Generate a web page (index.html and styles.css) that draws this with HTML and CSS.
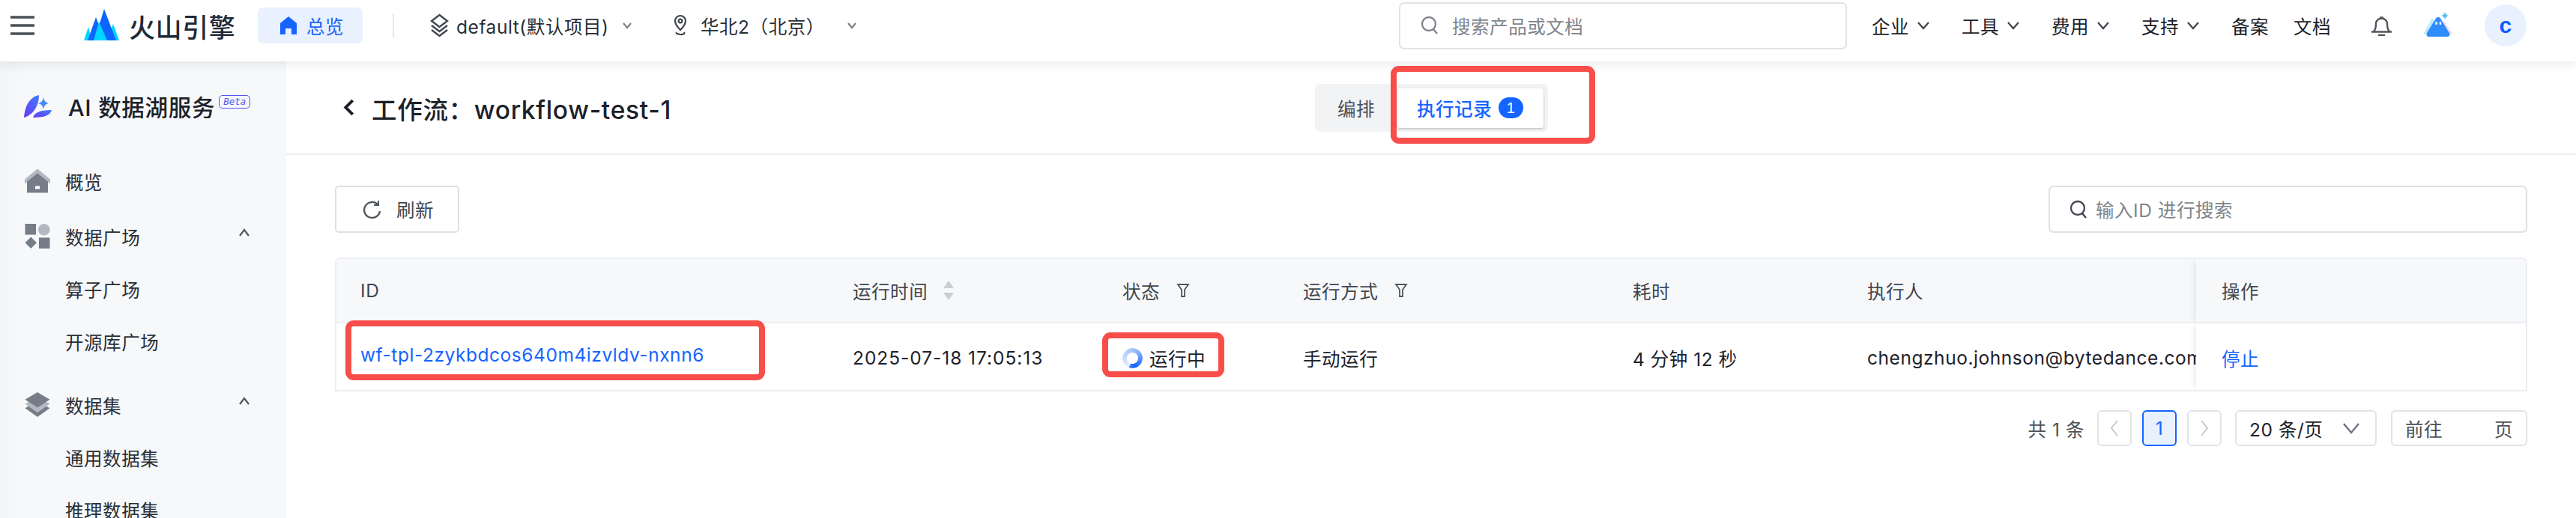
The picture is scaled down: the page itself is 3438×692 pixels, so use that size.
FILE: index.html
```html
<!DOCTYPE html>
<html lang="en">
<head>
  <meta charset="UTF-8" />
  <title>工作流 - AI 数据湖服务</title>
  <link rel="stylesheet" href="styles.css">
</head>
<body>
  <header class="topbar">
    <svg class="menu-icon" viewBox="0 0 32 26"><path d="M0 2h32M0 13h32M0 24h32" stroke="#4b5057" stroke-width="3.4" fill="none"/></svg>
    <svg class="logo" viewBox="0 0 47 43">
      <path d="M0 42 6 24 8 32 12 42z" fill="#00d5ff"/>
      <path d="M47 42 39 20 35 30 37 42z" fill="#00d5ff"/>
      <path d="M5 42 16 11 22 26 14 42z" fill="#0a66ff"/>
      <path d="M14 42 27 0 43 42z" fill="#0a66ff"/>
      <path d="M13 42 20 17 31 42z" fill="#00d5ff"/>
    </svg>
    <span class="brand">火山引擎</span>
    <a class="home-tab">
      <svg viewBox="0 0 22 24"><path d="M11 0 22 9v15h-7v-8H7v8H0V9z" fill="#1664ff"/></svg>
      总览
    </a>
    <span class="top-divider"></span>
    <div class="project">
      <svg class="project-icon" viewBox="0 0 27 32" fill="none" stroke="#41464f" stroke-width="2.4"><path d="M13.500 2 24 10 13.500 18 3 10zM3 16l10.500 8L24 16M3 22l10.500 8L24 22"/></svg>
      <span>default(默认项目)</span>
      <svg class="chev-small" viewBox="0 0 14 10"><path d="M2 2l5 6 5-6" fill="none" stroke="#7b818a" stroke-width="2.200"/></svg>
    </div>
    <div class="region">
      <svg class="pin-icon" viewBox="0 0 18 30" fill="none" stroke="#41464f" stroke-width="2.200"><path d="M9 21C4 16 2 12 2 9a7 7 0 0 1 14 0c0 3-2 7-7 12z"/><circle cx="9" cy="9" r="2.400"/><path d="M4 24c-3 3 13 5 10 0"/></svg>
      <span>华北2（北京）</span>
      <svg class="chev-small" viewBox="0 0 14 10"><path d="M2 2l5 6 5-6" fill="none" stroke="#7b818a" stroke-width="2.200"/></svg>
    </div>
    <div class="top-search">
      <svg class="search-icon" viewBox="0 0 24 26" fill="none" stroke="#80858c" stroke-width="2.300"><circle cx="11" cy="11" r="9"/><path d="M17 18l5 6"/></svg>
      <span>搜索产品或文档</span>
    </div>
    <nav class="top-nav">
      <a class="nav-drop">企业<svg viewBox="0 0 18 12"><path d="M2 2l7 8 7-8" fill="none" stroke="#41464f" stroke-width="2.300"/></svg></a>
      <a class="nav-drop">工具<svg viewBox="0 0 18 12"><path d="M2 2l7 8 7-8" fill="none" stroke="#41464f" stroke-width="2.300"/></svg></a>
      <a class="nav-drop">费用<svg viewBox="0 0 18 12"><path d="M2 2l7 8 7-8" fill="none" stroke="#41464f" stroke-width="2.300"/></svg></a>
      <a class="nav-drop">支持<svg viewBox="0 0 18 12"><path d="M2 2l7 8 7-8" fill="none" stroke="#41464f" stroke-width="2.300"/></svg></a>
      <a class="nav-plain">备案</a>
      <a class="nav-plain">文档</a>
    </nav>
    <svg class="bell" viewBox="0 0 27 28"><path d="M3 22c2-2 3-4 3-10a7.500 7.500 0 0 1 15 0c0 6 1 8 3 10M0 22.500h27M9 27h9M11 3.500h5" fill="none" stroke="#50555c" stroke-width="2.400"/></svg>
    <svg class="mascot" viewBox="0 0 40 34">
      <path d="M0 30 12 8 24 30z" fill="#b9ecfb"/>
      <path d="M18 30 28 12 40 30z" fill="#fbdcf6"/>
      <path d="M20 7 C18 7 17 8 16 10 L5 28 C4 31 5 33 8 33 H32 C35 33 36 31 35 28 L24 10 C23 8 22 7 20 7z" fill="#2f8cfb"/>
      <ellipse cx="17.500" cy="15" rx="1.300" ry="2.300" fill="#fff"/>
      <ellipse cx="23" cy="15" rx="1.300" ry="2.300" fill="#fff"/>
      <path d="M29 0c1 3 2 4 5 5-3 1-4 2-5 5-1-3-2-4-5-5 3-1 4-2 5-5z" fill="#4cc4f7"/>
    </svg>
    <span class="avatar">c</span>
  </header>

  <div class="layout">
    <aside class="sidebar">
      <div class="side-title">
        <svg class="side-logo" viewBox="0 0 38 30">
          <defs><linearGradient id="leaf" x1="0" y1="1" x2="1" y2="0"><stop offset="0" stop-color="#6a3cf0"/><stop offset="1" stop-color="#3f7bff"/></linearGradient></defs>
          <path d="M0 30C1 17 6 3 20 0 20 12 14 26 0 30z" fill="url(#leaf)"/>
          <path d="M12 30C14 24 20 20 37 20 35 26 30 30 12 30z" fill="url(#leaf)"/>
          <path d="M26 3c1 5 3 7 7 8-4 1-6 3-7 8-1-5-3-7-7-8 4-1 6-3 7-8z" fill="#4a8cf5"/>
        </svg>
        <span class="side-name">AI 数据湖服务</span>
        <span class="beta">Beta</span>
      </div>
      <ul class="side-menu">
        <li class="side-item top-level first">
          <svg viewBox="0 0 34 32"><path d="M17 0 34 14v6L17 7 0 20v-6z" fill="#b4b9c1"/><path d="M17 6 31 17v15H3V17z" fill="#767d89"/><rect x="14" y="23" width="6" height="4" fill="#fff"/></svg>
          概览
        </li>
        <li class="side-item top-level">
          <svg viewBox="0 0 34 34"><rect width="15" height="15" y="0" fill="#767d89"/><circle cx="26" cy="8" r="8" fill="#b4b9c1"/><path d="M8 18l8 8-8 8-8-8z" fill="#767d89"/><rect x="19" y="19" width="15" height="15" fill="#767d89"/></svg>
          数据广场
          <svg class="side-chev" viewBox="0 0 16 12"><path d="M2 10l6-8 6 8" fill="none" stroke="#50555c" stroke-width="2.200"/></svg>
        </li>
        <li class="side-item sub">算子广场</li>
        <li class="side-item sub">开源库广场</li>
        <li class="side-item top-level group-gap">
          <svg viewBox="0 0 34 34"><path d="M17 12l17 10-17 12L0 22z" fill="#767d89"/><path d="M17 6l17 10-17 12L0 16z" fill="#b4b9c1"/><path d="M17 0l17 10-17 11L0 10z" fill="#767d89"/></svg>
          数据集
          <svg class="side-chev" viewBox="0 0 16 12"><path d="M2 10l6-8 6 8" fill="none" stroke="#50555c" stroke-width="2.200"/></svg>
        </li>
        <li class="side-item sub">通用数据集</li>
        <li class="side-item sub">推理数据集</li>
      </ul>
    </aside>

    <main class="content">
      <div class="page-head">
        <svg class="back" viewBox="0 0 14 22"><path d="M12 2 3 11l9 9" fill="none" stroke="#1d2129" stroke-width="3.800"/></svg>
        <h1>工作流：workflow-test-1</h1>
        <div class="tabs">
          <span class="tab">编排</span>
          <span class="tab active">执行记录<i class="count">1</i></span>
        </div>
      </div>

      <div class="body">
        <div class="toolbar">
          <button class="refresh">
            <svg viewBox="0 0 24 24" fill="none" stroke="#50555c" stroke-width="2.300"><path d="M19 5A10.500 10.500 0 1 0 22 14"/><path d="M20 0v6h-6" stroke-width="2"/></svg>
            刷新
          </button>
          <div class="id-search">
            <svg viewBox="0 0 24 26" fill="none" stroke="#41464f" stroke-width="2.300"><circle cx="11" cy="11" r="9"/><path d="M17 18l5 6"/></svg>
            <span>输入ID 进行搜索</span>
          </div>
        </div>

        <div class="table">
          <div class="cell th">ID</div>
          <div class="cell th">运行时间
            <svg class="sort" viewBox="0 0 16 26"><path d="M8 0l7 10H1zM8 26l7-10H1z" fill="#c9ced6"/></svg>
          </div>
          <div class="cell th">状态
            <svg class="filter" viewBox="0 0 20 20"><path d="M3 2h14l-5 7v9h-4V9z" fill="none" stroke="#50555c" stroke-width="1.800"/></svg>
          </div>
          <div class="cell th">运行方式
            <svg class="filter" viewBox="0 0 20 20"><path d="M3 2h14l-5 7v9h-4V9z" fill="none" stroke="#50555c" stroke-width="1.800"/></svg>
          </div>
          <div class="cell th">耗时</div>
          <div class="cell th">执行人</div>
          <div class="cell th fixed">操作</div>

          <div class="cell td id-cell"><a class="link">wf-tpl-2zykbdcos640m4izvldv-nxnn6</a></div>
          <div class="cell td time-cell">2025-07-18 17:05:13</div>
          <div class="cell td status">
            <span class="spinner"></span>运行中
          </div>
          <div class="cell td">手动运行</div>
          <div class="cell td">4 分钟 12 秒</div>
          <div class="cell td">chengzhuo.johnson@bytedance.com</div>
          <div class="cell td fixed"><a class="link">停止</a></div>
        </div>

        <div class="pager">
          <span class="total">共 1 条</span>
          <span class="page-btn off"><svg viewBox="0 0 12 24"><path d="M10 2 2 12l8 10" fill="none" stroke="#c3c8d0" stroke-width="2"/></svg></span>
          <span class="page-btn on">1</span>
          <span class="page-btn off"><svg viewBox="0 0 12 24"><path d="M2 2l8 10-8 10" fill="none" stroke="#c3c8d0" stroke-width="2"/></svg></span>
          <span class="page-size">20 条/页<svg viewBox="0 0 24 16"><path d="M2 2l10 12L22 2" fill="none" stroke="#6b7280" stroke-width="2.400"/></svg></span>
          <span class="page-jump"><span>前往</span><span>页</span></span>
        </div>
      </div>
    </main>
  </div>

  <!-- red boxes someone drew on the screenshot -->
  <div class="mark mark-tab"></div>
  <div class="mark mark-id"></div>
  <div class="mark mark-status"></div>
</body>
</html>
```

FILE: styles.css
```css
* {
  box-sizing: border-box;
}
html, body {
  margin: 0;
  padding: 0;
  height: 692px;
  overflow: hidden;
}
body {
  position: relative;
  width: 3438px;
  background: #fff;
  color: #1d2129;
  font-family: Inter, "Noto Sans CJK SC", sans-serif;
  font-size: 24.5px;
  letter-spacing: 0.55px;
}

/* top bar */
.topbar {
  position: relative;
  z-index: 2;
  display: flex;
  align-items: center;
  height: 82px;
  padding-bottom: 14px;
  background: #fff;
  box-shadow: 0 3px 14px rgba(30, 40, 60, 0.1);
}
.menu-icon {
  width: 32px;
  height: 26px;
  margin-left: 14px;
}
.logo {
  width: 47px;
  height: 43px;
  margin-left: 66px;
  margin-top: -2px;
}
.brand {
  margin-left: 13px;
  width: 140px;
  font-size: 35px;
  font-weight: 500;
  letter-spacing: 0.6px;
  color: #1f2a3a;
  white-space: nowrap;
}
.home-tab {
  display: flex;
  align-items: center;
  gap: 13px;
  width: 140px;
  height: 48px;
  margin-left: 32px;
  padding-left: 30px;
  background: #e9f0fe;
  border-radius: 7px;
  color: #1664ff;
}
.home-tab svg {
  width: 22px;
  height: 24px;
}
.top-divider {
  width: 2px;
  height: 32px;
  margin-left: 40px;
  background: #e6e8eb;
}
.project {
  display: flex;
  align-items: center;
  margin-left: 47px;
  color: #2a2f36;
  white-space: nowrap;
}
.project-icon {
  width: 27px;
  height: 32px;
  margin-right: 9px;
}
.project span {
  width: 205px;
}
.chev-small {
  width: 14px;
  height: 10px;
  margin-left: 16px;
}
.region {
  display: flex;
  align-items: center;
  margin-left: 55px;
  color: #2a2f36;
  white-space: nowrap;
}
.pin-icon {
  width: 18px;
  height: 30px;
  margin-right: 18px;
}
.region span {
  width: 177px;
}
.region .chev-small {
  margin-left: 18px;
}
.top-search {
  display: flex;
  align-items: center;
  width: 598px;
  height: 63px;
  margin-left: 723px;
  padding-left: 27px;
  border: 2px solid #e0e4e9;
  border-radius: 7px;
  color: #7f848b;
  white-space: nowrap;
}
.search-icon {
  width: 24px;
  height: 26px;
  margin-right: 18px;
}
.top-nav {
  display: flex;
  align-items: center;
  margin-left: 33px;
  white-space: nowrap;
}
.nav-drop {
  display: flex;
  align-items: center;
  width: 120px;
}
.nav-drop svg {
  width: 18px;
  height: 12px;
  margin-left: 10px;
}
.nav-plain {
  width: 83px;
}
.bell {
  width: 27px;
  height: 28px;
  margin-left: 21px;
}
.mascot {
  width: 40px;
  height: 34px;
  margin-left: 42px;
  margin-top: -2px;
}
.avatar {
  display: flex;
  align-items: center;
  justify-content: center;
  width: 56px;
  height: 56px;
  margin-left: 42px;
  border-radius: 50%;
  background: #e9f0fe;
  color: #0f5bff;
  font-family: "Liberation Sans", sans-serif;
  font-size: 30px;
  font-weight: 700;
}

/* page frame */
.layout {
  display: flex;
  height: 610px;
}
.sidebar {
  width: 382px;
  flex-shrink: 0;
  background: linear-gradient(90deg, #f2f4f7, #f6f8fa 30px);
  overflow: hidden;
}
.side-title {
  display: flex;
  align-items: center;
  height: 30px;
  margin-top: 45px;
  padding-left: 32px;
}
.side-logo {
  width: 38px;
  height: 30px;
}
.side-name {
  margin-left: 21px;
  font-size: 30.5px;
  font-weight: 500;
  letter-spacing: 0.7px;
  white-space: nowrap;
}
.beta {
  margin: -12px 0 0 5px;
  padding: 0 5px;
  height: 18px;
  line-height: 15px;
  border: 1.5px solid #4e54f0;
  border-radius: 5px;
  color: #4e54f0;
  font-family: "DejaVu Sans Mono", monospace;
  font-size: 12.5px;
  font-style: italic;
  letter-spacing: 0;
}
.side-menu {
  margin: 0;
  padding: 0;
  list-style: none;
}
.side-item {
  position: relative;
  display: flex;
  align-items: center;
  height: 70px;
  padding-left: 87px;
  color: #2a2f36;
}
.side-item > svg:first-child {
  position: absolute;
  left: 33px;
  top: 18px;
  width: 34px;
  height: 33px;
}
.top-level {
  margin-top: 4px;
}
.top-level.first {
  margin-top: 50px;
}
.top-level.group-gap {
  margin-top: 15px;
}
.side-chev {
  position: absolute;
  left: 318px;
  top: 24px;
  width: 16px;
  height: 12px;
}

/* main */
.content {
  flex: 1;
  min-width: 0;
}
.page-head {
  position: relative;
  display: flex;
  align-items: center;
  height: 125px;
  padding-left: 76px;
  padding-top: 2px;
  border-bottom: 2px solid #eceef3;
}
.back {
  width: 15px;
  height: 23px;
  margin-bottom: 2px;
}
h1 {
  margin: 0 0 0 23px;
  font-size: 33.5px;
  font-weight: 500;
  letter-spacing: 0.7px;
  white-space: nowrap;
}
.tabs {
  position: absolute;
  left: 1373px;
  top: 30px;
  display: flex;
  align-items: center;
  width: 311px;
  height: 64px;
  background: #f1f3f5;
  border-radius: 7px;
}
.tab {
  padding-left: 30px;
  width: 110px;
  color: #4b5057;
}
.tab.active {
  display: flex;
  align-items: center;
  width: 195px;
  height: 53px;
  padding-left: 26px;
  background: #fff;
  border-radius: 3px;
  box-shadow: 0 1px 3px rgba(0, 0, 0, 0.25);
  color: #1664ff;
  font-weight: 500;
}
.count {
  display: flex;
  align-items: center;
  justify-content: center;
  width: 33px;
  height: 28px;
  margin-left: 9px;
  border-radius: 14px;
  background: #1664ff;
  color: #fff;
  font-family: "Liberation Sans", sans-serif;
  font-size: 20px;
  font-style: normal;
  font-weight: 400;
}
.body {
  padding: 41px 65px 0 65px;
}
.toolbar {
  display: flex;
  justify-content: space-between;
  height: 63px;
}
.refresh {
  display: flex;
  align-items: center;
  gap: 20px;
  width: 166px;
  padding-left: 36px;
  background: #fff;
  border: 2px solid #dde1e6;
  border-radius: 5px;
  color: #41464f;
  font: inherit;
  letter-spacing: inherit;
}
.refresh svg {
  width: 24px;
  height: 24px;
}
.id-search {
  display: flex;
  align-items: center;
  width: 639px;
  padding-left: 26px;
  border: 2px solid #dde1e6;
  border-radius: 7px;
  color: #80858c;
}
.id-search svg {
  width: 24px;
  height: 26px;
  margin-right: 11px;
}

/* table */
.table {
  display: grid;
  grid-template-columns: 657px 360px 241px 440px 313px 471px 440px;
  grid-template-rows: 86px 89px;
  margin-top: 33px;
  border: 2px solid #eceef3;
  border-radius: 7px 7px 0 0;
  overflow: hidden;
}
.cell {
  display: flex;
  align-items: center;
  padding-left: 32px;
  white-space: nowrap;
  overflow: hidden;
}
.cell.th {
  background: #f6f8fa;
  border-bottom: 2px solid #eceef3;
  color: #41464f;
}
.cell.td {
  padding-top: 3px;
  color: #1d2129;
}
.cell.id-cell {
  padding-top: 0;
  padding-bottom: 5px;
}
.time-cell {
  letter-spacing: 0.95px;
}
.fixed {
  padding-left: 34px;
  box-shadow: -6px 0 8px -4px rgba(30, 40, 60, 0.1);
}
.link {
  color: #1664ff;
}
.sort {
  width: 16px;
  height: 26px;
  margin-left: 20px;
}
.filter {
  width: 20px;
  height: 20px;
  margin-left: 21px;
}
.spinner {
  width: 27px;
  height: 27px;
  margin-right: 9px;
  border-radius: 50%;
  background: conic-gradient(from 200deg, #e6effe, #9dbefa 50%, #1664ff 90%, #3d80f7);
  -webkit-mask: radial-gradient(circle, transparent 7px, #000 8px);
  mask: radial-gradient(circle, transparent 7px, #000 8px);
}

/* pager */
.pager {
  display: flex;
  justify-content: flex-end;
  align-items: center;
  height: 48px;
  margin-top: 25px;
}
.total {
  margin-right: 17px;
  color: #4b5057;
  white-space: nowrap;
}
.page-btn {
  display: flex;
  align-items: center;
  justify-content: center;
  width: 46px;
  height: 48px;
  margin-right: 14px;
  border: 2px solid #e0e4e9;
  border-radius: 6px;
}
.page-btn svg {
  width: 12px;
  height: 24px;
}
.page-btn.on {
  background: #e9f0fe;
  border-color: #1664ff;
  color: #1664ff;
}
.page-btn + .page-size {
  margin-left: 4px;
}
.page-size {
  display: flex;
  align-items: center;
  justify-content: space-between;
  width: 189px;
  height: 48px;
  padding: 0 20px 0 17px;
  border: 2px solid #e0e4e9;
  border-radius: 6px;
  white-space: nowrap;
}
.page-size svg {
  width: 24px;
  height: 16px;
}
.page-jump {
  display: flex;
  align-items: center;
  justify-content: space-between;
  width: 182px;
  height: 48px;
  margin-left: 19px;
  padding: 0 17px;
  border: 2px solid #e0e4e9;
  border-radius: 6px;
  color: #4b5057;
}

/* annotations */
.mark {
  position: absolute;
  z-index: 3;
  border: 8px solid #f84e4a;
  border-radius: 11px;
}
.mark-tab {
  left: 1856px;
  top: 88px;
  width: 273px;
  height: 104px;
}
.mark-id {
  left: 461px;
  top: 428px;
  width: 560px;
  height: 80px;
}
.mark-status {
  left: 1471px;
  top: 444px;
  width: 163px;
  height: 60px;
}
```
